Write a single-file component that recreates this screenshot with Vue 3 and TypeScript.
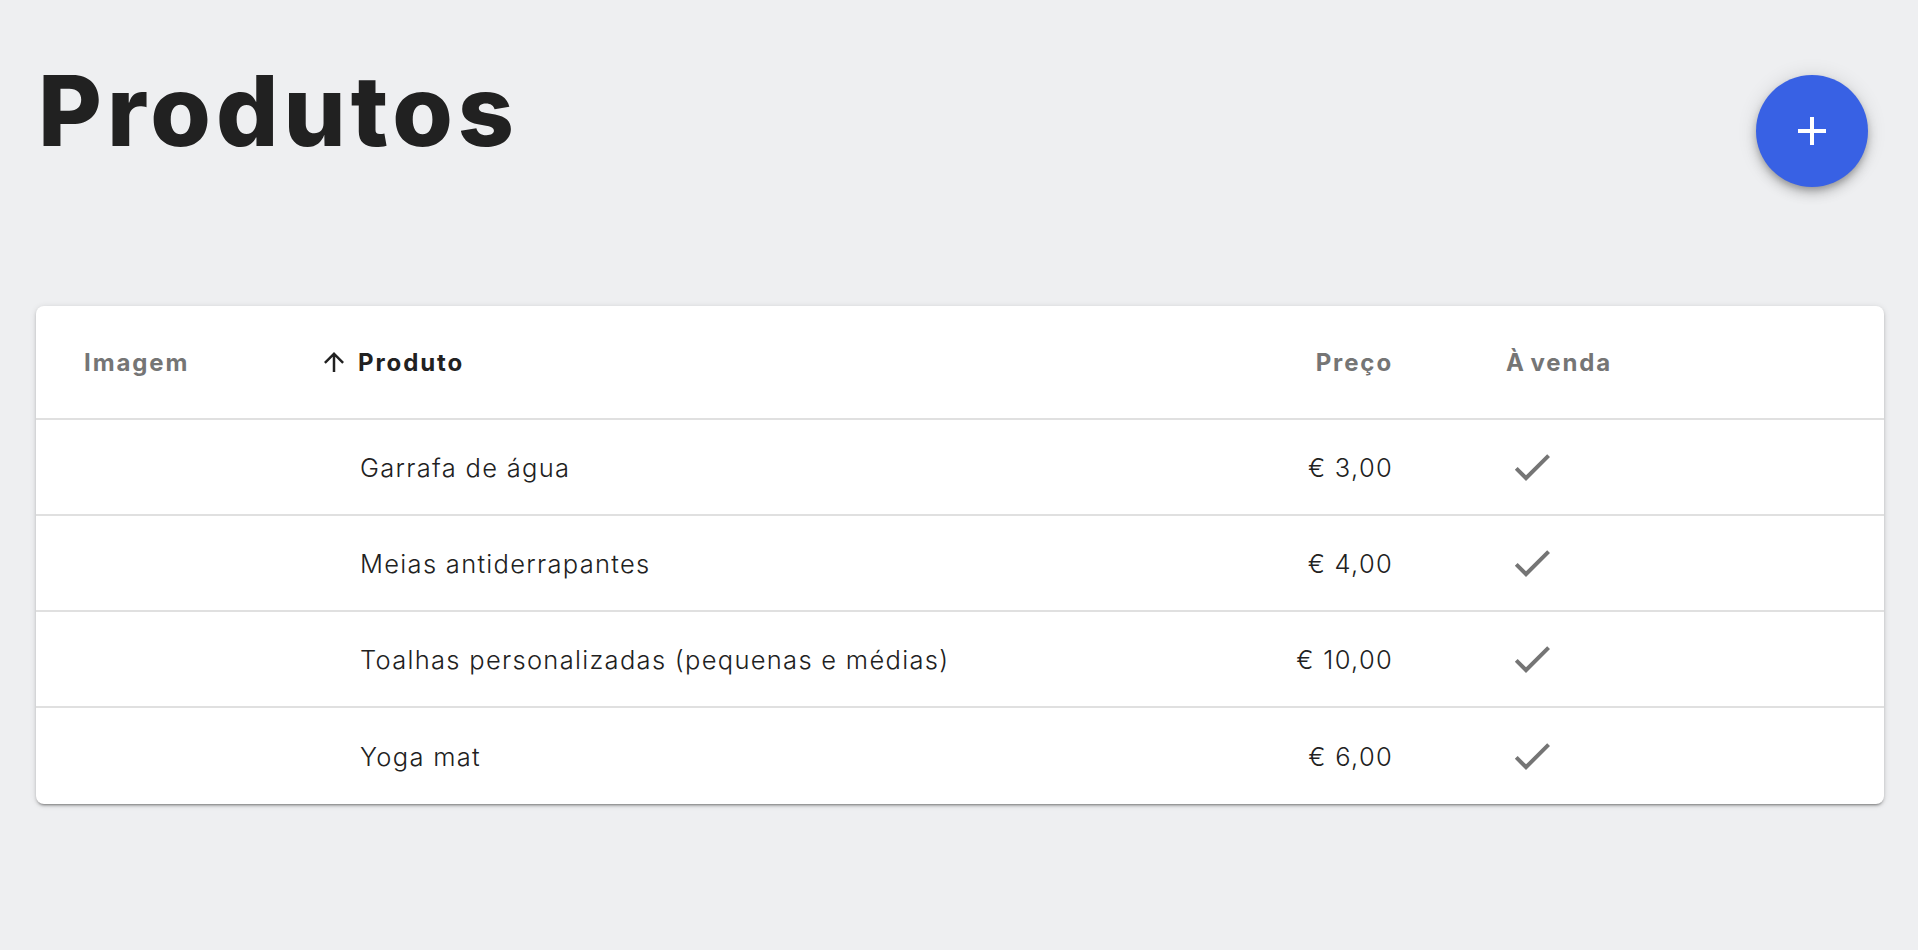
<script setup lang="ts">
interface Product { name: string; price: string }
const products: Product[] = [
  { name: 'Garrafa de água', price: '€ 3,00' },
  { name: 'Meias antiderrapantes', price: '€ 4,00' },
  { name: 'Toalhas personalizadas (pequenas e médias)', price: '€ 10,00' },
  { name: 'Yoga mat', price: '€ 6,00' },
]
</script>

<template>
  <main class="page">
    <header class="top">
      <h1 class="title">Produtos</h1>
      <button class="fab" type="button" aria-label="Adicionar">
        <svg viewBox="0 0 24 24" width="48" height="48"><path d="M19 13h-6v6h-2v-6H5v-2h6V5h2v6h6v2z" fill="#fff" /></svg>
      </button>
    </header>
    <section class="card">
      <div class="row head">
        <div class="muted">Imagem</div>
        <div class="sorted">
          <svg viewBox="0 0 24 24" width="30" height="30"><path d="M4 12l1.41 1.41L11 7.83V20h2V7.83l5.58 5.59L20 12l-8-8-8 8z" fill="#212121" /></svg>
          <span>Produto</span>
        </div>
        <div class="muted price">Preço</div>
        <div class="muted">À venda</div>
      </div>
      <div v-for="p in products" :key="p.name" class="row item">
        <div></div>
        <div>{{ p.name }}</div>
        <div class="price">{{ p.price }}</div>
        <div class="check">
          <svg viewBox="0 0 24 24" width="48" height="48"><path d="M9 16.17L4.83 12l-1.42 1.41L9 19 21 7l-1.41-1.41z" fill="#757575" /></svg>
        </div>
      </div>
    </section>
  </main>
</template>

<style>
html, body { margin: 0; background: #eeeff1; }
</style>

<style scoped>
.page {
  min-height: 950px;
  box-sizing: border-box;
  padding: 0 34px 0 36px;
  font-family: Inter, "Liberation Sans", sans-serif;
  color: #212121;
}
.top {
  height: 306px;
  display: flex;
  justify-content: space-between;
  align-items: flex-start;
  padding-right: 16px;
  box-sizing: border-box;
}
.title {
  margin: 60px 0 0 2px;
  font-size: 98px;
  line-height: 102px;
  font-weight: 800;
  letter-spacing: 5px;
}
.fab {
  margin-top: 75px;
  width: 112px;
  height: 112px;
  border: 0;
  border-radius: 50%;
  background: #3861e4;
  display: flex;
  align-items: center;
  justify-content: center;
  padding: 0;
  box-shadow: 0 4px 6px -1px rgba(0,0,0,.22), 0 7px 12px 0 rgba(0,0,0,.14), 0 1px 20px 0 rgba(0,0,0,.12);
}
.card {
  background: #fff;
  border-radius: 8px;
  box-shadow: 0 3px 2px -2px rgba(0,0,0,.28), 0 2px 3px 0 rgba(0,0,0,.16), 0 1px 6px 0 rgba(0,0,0,.12);
  overflow: hidden;
}
.row {
  display: grid;
  grid-template-columns: 276px 1fr 313px 378px;
  padding-left: 48px;
  align-items: center;
  border-bottom: 2px solid #e0e0e0;
  box-sizing: border-box;
}
.row:last-child { border-bottom: 0; }
.head {
  height: 114px;
  font-size: 24px;
  font-weight: 700;
  letter-spacing: 1.9px;
  word-spacing: -3px;
}
.item {
  height: 96px;
  font-size: 25.5px;
  font-weight: 300;
  letter-spacing: 1.3px;
}
.muted { color: #757575; }
.price { text-align: right; padding-right: 113px; white-space: nowrap; }
.sorted {
  display: flex;
  align-items: center;
  gap: 9px;
  margin-left: -41px;
}
.check { display: flex; padding-left: 2px; }
</style>
